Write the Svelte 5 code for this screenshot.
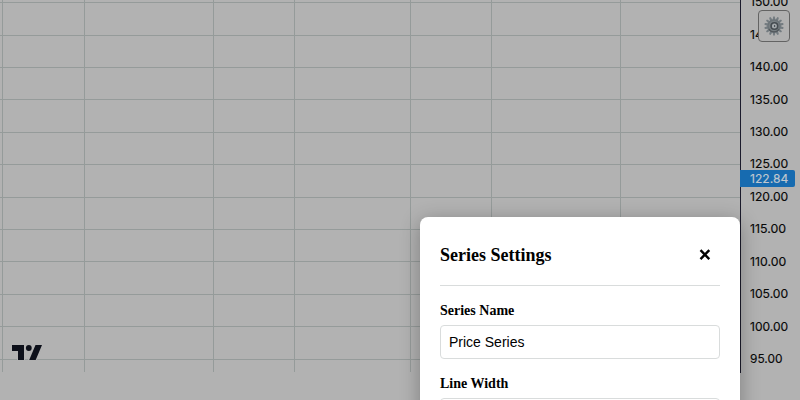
<script>
  const columns = [2, 84, 213, 294, 410, 491, 620];
  const rows = [2, 35, 67, 99, 132, 164, 197, 229, 261, 294, 326, 359];
  const prices = rows.map((y, i) => {
    const label = (150 - i * 5).toFixed(2);
    const width = label.length === 5 ? 32.5 : label.startsWith('11') ? 36.2 : 38.2;
    return { baseline: Math.floor(6.8 + i * 32.42), label, width };
  });
  const teeth = Array.from({ length: 14 }, (_, i) => (i * 360) / 14);
  let name = $state('Price Series');
</script>

<main>
  <svg class="chart" width="800" height="400" viewBox="0 0 800 400">
    <g class="grid">
      {#each columns as x}<rect {x} y="0" width="1" height="372" />{/each}
      {#each rows as y}<rect x="0" {y} width="740" height="1" />{/each}
    </g>
    <rect x="740" y="0" width="1" height="373" fill="#1b1b2c" />
    <g class="prices">
      {#each prices as p}
        <text x="750" y={p.baseline} textLength={p.width} lengthAdjust="spacingAndGlyphs">{p.label}</text>
      {/each}
    </g>
    <path d="M740 170H793a2 2 0 0 1 2 2V185a2 2 0 0 1-2 2H740Z" fill="#176bb0" />
    <text class="current" x="750" y="183" textLength="38.3" lengthAdjust="spacingAndGlyphs">122.84</text>
    <g class="logo">
      <path class="halo" d="M12 345H24V360H18V351H12ZM36 345H42L35.5 360H29Z" />
      <circle class="halo" cx="29" cy="348" r="3" />
      <path d="M12 345H24V360H18V351H12ZM35.5 345H42L35.7 360H29.2Z" />
      <circle cx="28.8" cy="348" r="2.9" />
    </g>
  </svg>

  <button class="gear" aria-label="Settings">
    <svg width="20" height="20" viewBox="-10 -10 20 20">
      <g fill="#737b80">
        {#each teeth as angle}
          <path d="M-1.4-6L-.8-9.6H.8L1.4-6Z" transform="rotate({angle})" />
        {/each}
      </g>
      <circle r="6" fill="#787f83" stroke="#6b7378" stroke-width="1.4" />
      <path d="M-5 3A5.8 5.8 0 0 0 5 3" fill="none" stroke="#53595d" stroke-width="1.3" />
      <circle r="3.3" cx=".4" fill="#a3a8ab" stroke="#454c51" stroke-width="1.6" />
      <path d="M.6-1V1" stroke="#485057" stroke-width="1.1" />
    </svg>
  </button>

  <section class="dialog">
    <header>
      <h3>Series Settings</h3>
      <button class="close" aria-label="Close">
        <svg width="12" height="12" viewBox="0 0 12 12"><path d="M1.5 1.1L10.3 10.1M10.3 1.1L1.5 10.1" /></svg>
      </button>
    </header>
    <label for="name">Series Name</label>
    <input id="name" bind:value={name} />
    <label for="width">Line Width</label>
    <input id="width" />
  </section>
</main>

<style>
  :global(body) { margin: 0; overflow: hidden; }
  main {
    position: relative;
    width: 800px;
    height: 400px;
    overflow: hidden;
    background: #b2b2b2;
    color: #000;
    font-family: "Liberation Serif", serif;
  }
  .chart { display: block; }
  .grid { fill: #959b9a; }
  .prices, .current { font: 12px Inter, sans-serif; }
  .prices { fill: #080808; stroke: #080808; stroke-width: .15; }
  .current { fill: #c0c8cf; stroke: #c0c8cf; stroke-width: .15; }
  .logo { fill: #0d101a; }
  .halo { fill: #b2b2b2; stroke: #b2b2b2; stroke-width: 2; }
  .gear {
    position: absolute;
    top: 10px;
    right: 10px;
    box-sizing: border-box;
    width: 32px;
    height: 32px;
    padding: 0;
    display: flex;
    align-items: center;
    justify-content: center;
    background: #b0b0b0;
    border: 1px solid #636363;
    border-radius: 4px;
  }
  .dialog {
    position: absolute;
    left: 420px;
    top: 217px;
    box-sizing: border-box;
    width: 320px;
    height: 366px;
    padding: 20px;
    background: #fff;
    border-radius: 8px;
    box-shadow: 0 4px 20px rgba(0, 0, 0, .3);
  }
  header {
    display: flex;
    align-items: center;
    justify-content: space-between;
    box-sizing: border-box;
    height: 49px;
    padding-bottom: 13px;
    border-bottom: 1px solid #d9dcdc;
    margin-bottom: 16px;
  }
  h3 { margin: 0; font-size: 18px; line-height: 22px; }
  .close {
    display: flex;
    padding: 0;
    margin: 0 9px 0 0;
    border: 0;
    background: none;
  }
  .close path { stroke: #000; stroke-width: 2.4; fill: none; }
  label { display: block; height: 18px; margin-bottom: 5px; font-size: 14px; font-weight: bold; line-height: 18px; }
  input {
    display: block;
    box-sizing: border-box;
    width: 280px;
    height: 34px;
    margin: 0 0 16px;
    padding: 8px;
    border: 1px solid #d9dcdc;
    border-radius: 4px;
    background: #fff;
    color: #000;
    font: 14px "Liberation Sans", Arial, sans-serif;
  }
</style>
